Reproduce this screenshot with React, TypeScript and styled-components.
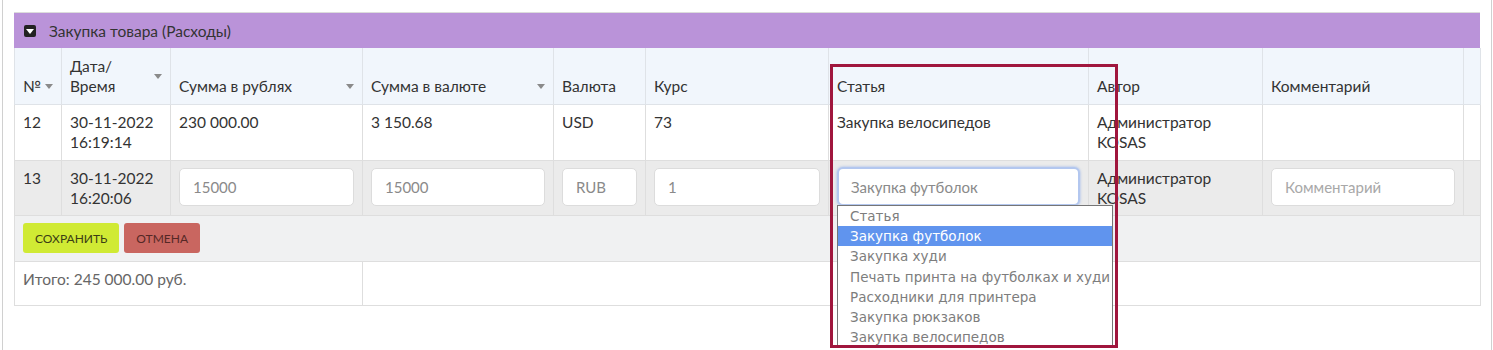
import React from 'react';
import styled, { createGlobalStyle } from 'styled-components';

const GlobalStyle = createGlobalStyle`
  body {
    margin: 0;
    background: #fff;
    font-family: Lato, "Noto Sans", sans-serif;
    color: #333;
  }
`;

const Page = styled.div`
  box-sizing: border-box;
  width: 1490px;
  height: 350px;
  margin-left: 2px;
  padding: 12px 11px 0 11px;
  border-left: 1px solid #d0d0d0;
  border-right: 1px solid #d0d0d0;
  overflow: hidden;
`;

const Panel = styled.section`
  position: relative;
  width: 1466px;
`;

const PanelHeader = styled.div`
  display: flex;
  align-items: center;
  gap: 13px;
  height: 35px;
  padding: 0 10px;
  background: #ba93d9;
  border-top: 1px solid #dcdcdc;
  font-size: 15.5px;
  color: #333;
`;

const Toggle = styled.span`
  position: relative;
  width: 12px;
  height: 12px;
  border-radius: 2px;
  background: #222;

  &::after {
    content: '';
    position: absolute;
    left: 2px;
    top: 4px;
    border-left: 4px solid transparent;
    border-right: 4px solid transparent;
    border-top: 5px solid #fff;
  }
`;

const Table = styled.table`
  width: 1466px;
  table-layout: fixed;
  border-collapse: collapse;
  font-size: 15.5px;
  line-height: 20px;
`;

const HeadRow = styled.tr`
  height: 55px;
  background: #f1f6fc;
`;

const Th = styled.th`
  padding: 8px 8px;
  border: 1px solid #dfe3e8;
  border-top: none;
  text-align: left;
  vertical-align: bottom;
  font-weight: 400;
  color: #333;
`;

const HeadInner = styled.div`
  display: flex;
  align-items: center;
  justify-content: space-between;
  gap: 2px;
`;

const SortArrow = styled.span`
  flex: none;
  width: 0;
  height: 0;
  border-left: 4px solid transparent;
  border-right: 4px solid transparent;
  border-top: 5px solid #8a8a8a;
`;

const Row = styled.tr<{ $bg: string; $h: number }>`
  height: ${(p) => p.$h}px;
  background: ${(p) => p.$bg};
`;

const Td = styled.td<{ $muted?: boolean }>`
  padding: 7px 8px;
  border: 1px solid #dedede;
  vertical-align: top;
  color: ${(p) => (p.$muted ? '#666' : '#333')};
`;

const Field = styled.input`
  box-sizing: border-box;
  display: block;
  width: 100%;
  height: 38px;
  padding: 0 13px;
  border: 1px solid #dcdcdc;
  border-radius: 5px;
  background: #fff;
  font: inherit;
  font-size: 15px;
  color: #8a8a8a;
  outline: none;

  &::placeholder {
    color: #a8a8a8;
  }
`;

const SelectWrap = styled.div`
  position: relative;
`;

const SelectBox = styled.div`
  box-sizing: border-box;
  display: flex;
  align-items: center;
  height: 39px;
  margin-top: -1px;
  padding: 0 12px;
  border: 2px solid #b3c7ef;
  border-radius: 6px;
  background: #fff;
  box-shadow: 0 0 2px 1px rgba(160, 185, 235, 0.5);
  font-size: 15px;
  color: #8a8a8a;
`;

const ListBox = styled.ul`
  position: absolute;
  left: 0;
  top: 38px;
  z-index: 2;
  box-sizing: border-box;
  width: 276px;
  margin: 0;
  padding: 0;
  list-style: none;
  background: #fff;
  border: 1px solid #767676;
  font-family: "DejaVu Sans", sans-serif;
  font-size: 13.5px;
  line-height: 20.2px;
`;

const Option = styled.li<{ $active?: boolean }>`
  padding: 0 12px;
  white-space: nowrap;
  color: ${(p) => (p.$active ? '#fff' : '#7d7d7d')};
  background: ${(p) => (p.$active ? '#6094ee' : 'transparent')};
`;

const Actions = styled.div`
  display: flex;
  gap: 5px;
`;

const Button = styled.button<{ $bg: string; $fg: string }>`
  height: 30px;
  padding: 0 12px;
  border: none;
  border-radius: 3px;
  background: ${(p) => p.$bg};
  color: ${(p) => p.$fg};
  font-family: Lato, sans-serif;
  font-size: 12px;
  text-transform: uppercase;
  cursor: pointer;
`;

const Highlight = styled.div`
  position: absolute;
  left: 816px;
  top: 52px;
  width: 288px;
  height: 284px;
  box-sizing: border-box;
  border: 3px solid #a0163d;
  pointer-events: none;
  z-index: 3;
`;

const columns = [
  { title: '№', width: 47, sort: true },
  { title: 'Дата/ Время', width: 109, sort: true },
  { title: 'Сумма в рублях', width: 192, sort: true },
  { title: 'Сумма в валюте', width: 191, sort: true },
  { title: 'Валюта', width: 92 },
  { title: 'Курс', width: 183 },
  { title: 'Статья', width: 260 },
  { title: 'Автор', width: 174 },
  { title: 'Комментарий', width: 201 },
  { title: '', width: 17 },
];

const options = [
  'Статья',
  'Закупка футболок',
  'Закупка худи',
  'Печать принта на футболках и худи',
  'Расходники для принтера',
  'Закупка рюкзаков',
  'Закупка велосипедов',
];

export default function App() {
  return (
    <>
      <GlobalStyle />
      <Page>
        <Panel>
          <PanelHeader>
            <Toggle />
            Закупка товара (Расходы)
          </PanelHeader>
          <Table>
            <colgroup>
              {columns.map((c, i) => (
                <col key={i} style={{ width: c.width }} />
              ))}
            </colgroup>
            <thead>
              <HeadRow>
                {columns.map((c, i) => (
                  <Th key={i}>
                    <HeadInner>
                      <span>
                        {c.title === 'Дата/ Время' ? (
                          <>
                            Дата/
                            <br />
                            Время
                          </>
                        ) : (
                          c.title
                        )}
                      </span>
                      {c.sort && <SortArrow />}
                    </HeadInner>
                  </Th>
                ))}
              </HeadRow>
            </thead>
            <tbody>
              <Row $bg="#fff" $h={56}>
                <Td>12</Td>
                <Td>
                  30-11-2022
                  <br />
                  16:19:14
                </Td>
                <Td>230 000.00</Td>
                <Td>3 150.68</Td>
                <Td>USD</Td>
                <Td>73</Td>
                <Td>Закупка велосипедов</Td>
                <Td>
                  Администратор
                  <br />
                  KOSAS
                </Td>
                <Td />
                <Td />
              </Row>
              <Row $bg="#ebebeb" $h={55}>
                <Td>13</Td>
                <Td>
                  30-11-2022
                  <br />
                  16:20:06
                </Td>
                <Td>
                  <Field readOnly value="15000" />
                </Td>
                <Td>
                  <Field readOnly value="15000" />
                </Td>
                <Td>
                  <Field readOnly value="RUB" />
                </Td>
                <Td>
                  <Field readOnly value="1" />
                </Td>
                <Td>
                  <SelectWrap>
                    <SelectBox>Закупка футболок</SelectBox>
                    <ListBox>
                      {options.map((o, i) => (
                        <Option key={o} $active={i === 1}>
                          {o}
                        </Option>
                      ))}
                    </ListBox>
                  </SelectWrap>
                </Td>
                <Td>
                  Администратор
                  <br />
                  KOSAS
                </Td>
                <Td>
                  <Field placeholder="Комментарий" />
                </Td>
                <Td />
              </Row>
              <Row $bg="#f0f1f2" $h={46}>
                <Td colSpan={10}>
                  <Actions>
                    <Button $bg="#d0ea34" $fg="#3b3d14">
                      Сохранить
                    </Button>
                    <Button $bg="#c96660" $fg="#552826">
                      Отмена
                    </Button>
                  </Actions>
                </Td>
              </Row>
              <Row $bg="#fff" $h={44}>
                <Td colSpan={3} $muted>
                  Итого: 245 000.00 руб.
                </Td>
                <Td colSpan={7} />
              </Row>
            </tbody>
          </Table>
          <Highlight />
        </Panel>
      </Page>
    </>
  );
}
